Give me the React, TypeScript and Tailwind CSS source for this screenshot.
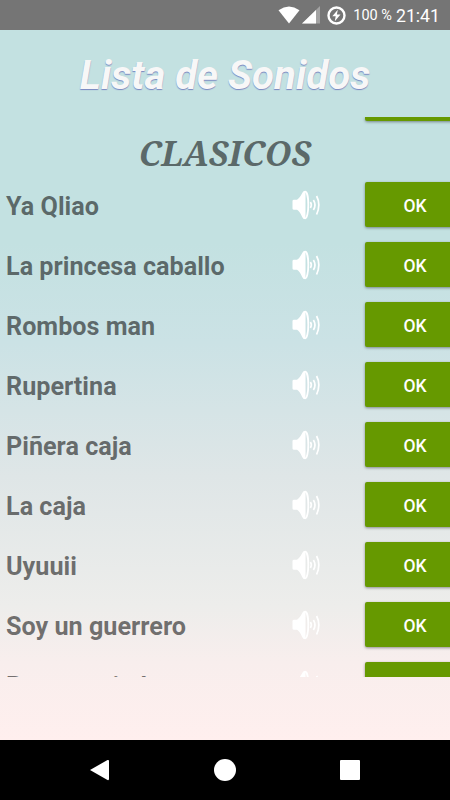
const sounds = [
  "Ya Qliao",
  "La princesa caballo",
  "Rombos man",
  "Rupertina",
  "Piñera caja",
  "La caja",
  "Uyuuii",
  "Soy un guerrero",
  "Pero su piedra",
];

const StatusBar = () => (
  <div className="flex h-[30px] shrink-0 items-center justify-end bg-[#757575] pr-[10px] text-white">
    <svg width="22" height="18" viewBox="0 0 22 18" className="mr-[2px]">
      <path d="M0.5 4.2 Q11 -3 21.5 4.2 L11 17.5 Z" fill="#fff" />
    </svg>
    <svg width="18" height="18" viewBox="0 0 18 18" className="mr-[7px]">
      <path d="M18 0 V17.5 H0 Z" fill="#a3a3a3" />
      <path d="M14 4 V17.5 H0 Z" fill="#fff" />
    </svg>
    <svg width="19" height="19" viewBox="0 0 19 19" className="mr-[7px]">
      <circle cx="9.5" cy="9.5" r="8" fill="none" stroke="#fff" strokeWidth="2.4" />
      <path d="M10.8 3.8 L5.3 10.3 H8.7 L7.8 15.2 L13.5 8.5 H9.9 Z" fill="#fff" />
    </svg>
    <span className="mr-[4px] pt-[2px] text-[14.5px] whitespace-nowrap">100 %</span>
    <span className="pt-[2px] text-[17.7px]">21:41</span>
  </div>
);

const SpeakerIcon = () => (
  <svg width="30" height="30" viewBox="0 0 30 30" className="shrink-0">
    <path d="M0.5 11 Q0.5 9.8 2 9.8 H5 C8 8 9.5 4 11 1.8 Q12 0.7 13.5 1 V29 Q12 29.3 11 28.2 C9.5 26 8 21.5 5 19.8 H2 Q0.5 19.8 0.5 18.6 Z" fill="#fff" />
    <ellipse cx="13.2" cy="15" rx="3.1" ry="13.3" fill="none" stroke="#fff" strokeWidth="1.8" />
    <path d="M18.4 12 Q20.3 14.8 18.4 18" fill="none" stroke="#fff" strokeWidth="1.7" />
    <path d="M21.4 10 Q24.6 15 21.4 20" fill="none" stroke="#fff" strokeWidth="1.7" />
    <path d="M24.6 6 Q29 14.5 24.6 24.5" fill="none" stroke="#fff" strokeWidth="1.7" />
  </svg>
);

const SoundRow = ({ name }: { name: string }) => (
  <div className="flex h-[60px] shrink-0 items-start">
    <span className="w-[292px] shrink-0 pt-[7px] pl-[6px] text-[25.2px] leading-[36px] font-bold whitespace-nowrap text-black/55">
      {name}
    </span>
    <div className="w-[73px] shrink-0 pt-[8px]">
      <SpeakerIcon />
    </div>
    <button className="h-[45px] w-[100px] shrink-0 rounded-[2px] bg-[#669900] pt-[3px] text-[17.5px] font-medium text-white shadow-[0_1px_3px_rgba(0,0,0,0.4)]">
      OK
    </button>
  </div>
);

const NavBar = () => (
  <div className="flex h-[60px] shrink-0 items-center justify-between bg-black px-[87px]">
    <svg width="24" height="24" viewBox="0 0 24 24">
      <path d="M3 12 L20.5 2 Q22 1.5 22 3 V21 Q22 22.5 20.5 22 Z" fill="#fff" />
    </svg>
    <div className="mr-[2px] h-[22px] w-[22px] rounded-full bg-white" />
    <div className="mr-[3px] h-5 w-5 rounded-[1px] bg-white" />
  </div>
);

export default function App() {
  return (
    <div className="flex h-[800px] w-[450px] flex-col overflow-hidden bg-white font-['Roboto',sans-serif]">
      <StatusBar />
      <main className="flex h-[710px] flex-col bg-[linear-gradient(to_bottom,#c3e1e1_0%,#c3e1e1_30%,#cbe2e5_44%,#dfe6e7_63%,#ededeb_81%,#f8eeed_89%,#ffefee_100%)]">
        <h1 className="h-[87px] shrink-0 pt-[19px] text-center text-[40.2px] leading-[54px] font-bold text-[#f7f7f7] italic [text-shadow:0_1px_1px_#7886c0]">
          Lista de Sonidos
        </h1>
        <div className="flex h-[560px] shrink-0 flex-col overflow-hidden">
          <div className="ml-[365px] h-[4px] w-[100px] shrink-0 rounded-b-[2px] bg-[#669900] shadow-[0_1px_3px_rgba(0,0,0,0.4)]" />
          <h2 className="h-[61px] shrink-0 pt-[11px] text-center font-['Noto_Serif','DejaVu_Serif',serif] text-[33.8px] leading-[42px] font-bold text-black/55 italic">
            CLASICOS
          </h2>
          {sounds.map((name) => (
            <SoundRow key={name} name={name} />
          ))}
        </div>
      </main>
      <NavBar />
    </div>
  );
}
